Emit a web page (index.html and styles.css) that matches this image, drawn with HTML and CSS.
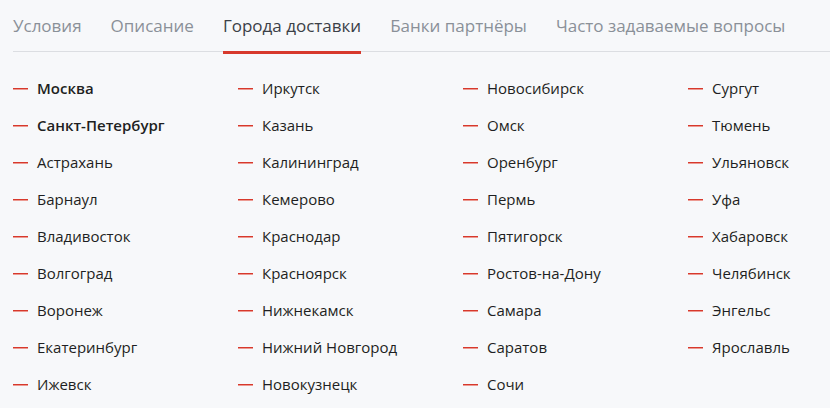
FILE: index.html
```html
<!DOCTYPE html>
<html lang="ru">
<head>
<meta charset="utf-8">
<link rel="stylesheet" href="styles.css">
</head>
<body>
<nav class="tabs">
  <a class="tab">Условия</a>
  <a class="tab">Описание</a>
  <a class="tab active">Города доставки</a>
  <a class="tab">Банки партнёры</a>
  <a class="tab">Часто задаваемые вопросы</a>
</nav>
<ul class="cities">
  <li class="bold">Москва</li>
  <li class="bold">Санкт-Петербург</li>
  <li>Астрахань</li>
  <li>Барнаул</li>
  <li>Владивосток</li>
  <li>Волгоград</li>
  <li>Воронеж</li>
  <li>Екатеринбург</li>
  <li>Ижевск</li>
  <li>Иркутск</li>
  <li>Казань</li>
  <li>Калининград</li>
  <li>Кемерово</li>
  <li>Краснодар</li>
  <li>Красноярск</li>
  <li>Нижнекамск</li>
  <li>Нижний Новгород</li>
  <li>Новокузнецк</li>
  <li>Новосибирск</li>
  <li>Омск</li>
  <li>Оренбург</li>
  <li>Пермь</li>
  <li>Пятигорск</li>
  <li>Ростов-на-Дону</li>
  <li>Самара</li>
  <li>Саратов</li>
  <li>Сочи</li>
  <li>Сургут</li>
  <li>Тюмень</li>
  <li>Ульяновск</li>
  <li>Уфа</li>
  <li>Хабаровск</li>
  <li>Челябинск</li>
  <li>Энгельс</li>
  <li>Ярославль</li>
</ul>
</body>
</html>
```
FILE: styles.css
```css
html, body {
  margin: 0;
  padding: 0;
}
body {
  background: #f7f8fa;
  font-family: "Open Sans", "Noto Sans", sans-serif;
  color: #1e1f22;
  width: 830px;
  height: 408px;
  overflow: hidden;
}
.tabs {
  display: flex;
  gap: 29px;
  margin-left: 13px;
  height: 51px;
  border-bottom: 1px solid #dcdee2;
}
.tab {
  position: relative;
  font-size: 17px;
  line-height: 52px;
  color: #8a9098;
  white-space: nowrap;
}
.tab.active {
  color: #3b4047;
}
.tab.active::after {
  content: "";
  position: absolute;
  left: 0;
  right: 0;
  bottom: -3px;
  height: 3px;
  background: #d7392c;
}
.cities {
  list-style: none;
  margin: 0;
  padding: 18px 0 0 13px;
  display: grid;
  grid-template-columns: repeat(3, 225px) 1fr;
  grid-template-rows: repeat(9, 37px);
  grid-auto-flow: column;
}
.cities li {
  display: flex;
  align-items: flex-start;
  gap: 9px;
  font-size: 15px;
  line-height: 37px;
  white-space: nowrap;
}
.cities li::before {
  content: "";
  width: 15px;
  height: 2px;
  margin-top: 18px;
  background: linear-gradient(#d7392c 0 60%, #ec9a92 60% 100%);
  flex: none;
}
.cities li.bold {
  font-weight: 600;
}
```
